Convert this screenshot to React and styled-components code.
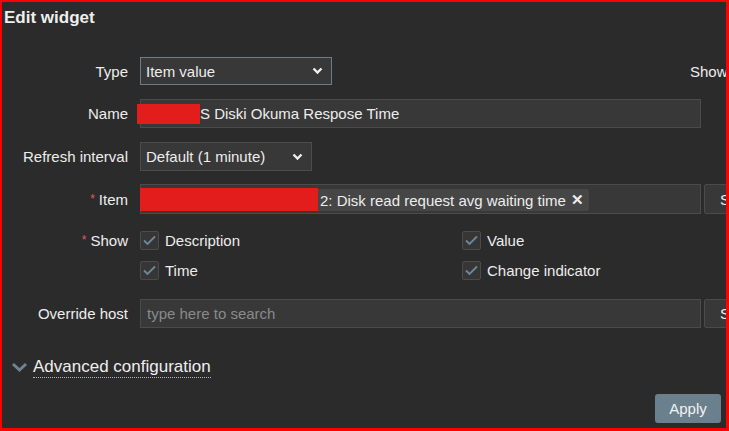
import React from "react";
import styled, { createGlobalStyle } from "styled-components";

const GlobalStyle = createGlobalStyle`
  html, body {
    margin: 0;
    padding: 0;
    background: #2b2b2b;
  }
  body {
    font-family: "Liberation Sans", Arial, sans-serif;
  }
`;

const Frame = styled.div`
  box-sizing: border-box;
  width: 729px;
  height: 431px;
  border: solid #ff0000;
  border-width: 2px 3px 3px 2px;
  background: #2b2b2b;
  overflow: hidden;
  color: #ededed;
  font-size: 15px;
`;

const Title = styled.div`
  padding: 6px 0 0 2px;
  font-size: 17px;
  line-height: 20px;
  font-weight: bold;
  color: #eeeeee;
`;

const Row = styled.div`
  display: flex;
  align-items: ${(p) => (p.top_align ? "flex-start" : "center")};
  margin-top: ${(p) => p.mt}px;
  height: ${(p) => (p.h ? `${p.h}px` : "auto")};
  white-space: nowrap;
`;

const Label = styled.div`
  flex-shrink: 0;
  width: 126px;
  margin-right: 12px;
  text-align: right;
  line-height: ${(p) => (p.lh ? `${p.lh}px` : "normal")};
`;

const Star = styled.span`
  color: #e45959;
  font-size: 12px;
  margin-right: 4px;
  position: relative;
  top: -2px;
`;

const SelectBox = styled.div`
  box-sizing: border-box;
  flex-shrink: 0;
  display: flex;
  align-items: center;
  justify-content: space-between;
  width: ${(p) => p.w}px;
  height: ${(p) => p.h || 29}px;
  padding: 0 8px 0 5px;
  background: #383838;
  border: 1px solid ${(p) => (p.focused ? "#6a7d89" : "#4c4c4c")};
`;

const SideLabel = styled.div`
  margin-left: ${(p) => p.ml}px;
`;

const TextField = styled.div`
  box-sizing: border-box;
  flex-shrink: 0;
  display: flex;
  align-items: center;
  width: 561px;
  height: ${(p) => p.h || 29}px;
  padding-left: ${(p) => (p.pl !== undefined ? p.pl : 6)}px;
  background: #383838;
  border: 1px solid #4b4b4b;
  color: ${(p) => (p.placeholder ? "#8a8a8a" : "#ededed")};
`;

const Redact = styled.span`
  display: inline-block;
  flex-shrink: 0;
  width: ${(p) => p.w}px;
  height: ${(p) => p.h}px;
  margin-left: ${(p) => p.ml || 0}px;
  background: #e31c1c;
  position: relative;
  top: ${(p) => p.dy || 0}px;
`;

const Tag = styled.div`
  display: flex;
  align-items: center;
  height: 22px;
  padding-right: 5px;
  margin-top: 2px;
  background: #464646;
  border-radius: 3px;
`;

const TagText = styled.span`
  margin-left: 2px;
`;

const Remove = styled.span`
  margin-left: 5px;
  font-weight: bold;
  font-size: 15px;
`;

const SideButton = styled.div`
  box-sizing: border-box;
  flex-shrink: 0;
  display: flex;
  align-items: center;
  margin-left: 3px;
  height: ${(p) => p.h || 29}px;
  padding: 0 15px;
  background: #383838;
  border: 1px solid #4b4b4b;
  border-radius: 2px;
`;

const CheckGrid = styled.div`
  display: grid;
  grid-template-columns: 322px auto;
  row-gap: 11px;
`;

const CheckItem = styled.div`
  display: flex;
  align-items: center;
  gap: 6px;
  height: 19px;
`;

const Box = styled.div`
  box-sizing: border-box;
  width: 19px;
  height: 19px;
  display: flex;
  align-items: center;
  justify-content: center;
  background: #363636;
  border: 1px solid #4b4b4b;
  border-radius: 2px;
`;

const Advanced = styled.div`
  display: flex;
  align-items: center;
  margin-top: 29px;
  padding-left: 9px;
  height: 21px;
`;

const AdvancedText = styled.span`
  margin-left: 5px;
  font-size: 17px;
  line-height: 20px;
  color: #eeeeee;
  border-bottom: 1px dotted #b5b5b5;
`;

const Footer = styled.div`
  display: flex;
  justify-content: flex-end;
  margin-top: 16px;
  padding-right: 5px;
`;

const Button = styled.div`
  box-sizing: border-box;
  display: flex;
  align-items: center;
  justify-content: center;
  width: 66px;
  height: 29px;
  background: #6b808d;
  border-radius: 3px;
  color: #f2f2f2;
  font-size: 15px;
`;

const Caret = () => (
  <svg width="11" height="8" viewBox="0 0 11 8">
    <polyline points="1.5,1.5 5.5,5.5 9.5,1.5" fill="none" stroke="#eeeeee" strokeWidth="2.4" />
  </svg>
);

const Tick = () => (
  <svg width="13" height="11" viewBox="0 0 13 11">
    <polyline points="1,5.5 4.5,9 12,1.5" fill="none" stroke="#6e8899" strokeWidth="1.8" />
  </svg>
);

const Check = ({ children }) => (
  <CheckItem>
    <Box>
      <Tick />
    </Box>
    {children}
  </CheckItem>
);

const App = () => {
  return (
    <>
      <GlobalStyle />
      <Frame>
        <Title>Edit widget</Title>

        <Row mt={29} h={28}>
          <Label>Type</Label>
          <SelectBox w={192} h={28} focused>
            Item value
            <Caret />
          </SelectBox>
          <SideLabel ml={358}>Show header</SideLabel>
        </Row>

        <Row mt={14} h={29}>
          <Label>Name</Label>
          <TextField pl={0}>
            <Redact w={63} h={20} ml={-4} />
            S Diski Okuma Respose Time
          </TextField>
        </Row>

        <Row mt={14} h={29}>
          <Label>Refresh interval</Label>
          <SelectBox w={172}>
            Default (1 minute)
            <Caret />
          </SelectBox>
        </Row>

        <Row mt={13} h={30}>
          <Label>
            <Star>*</Star>Item
          </Label>
          <TextField h={30} pl={0}>
            <Tag>
              <Redact w={178} h={23} ml={-1} dy={-1} />
              <TagText>2: Disk read request avg waiting time</TagText>
              <Remove>✕</Remove>
            </Tag>
          </TextField>
          <SideButton h={30}>Select</SideButton>
        </Row>

        <Row mt={17} top_align>
          <Label lh={19}>
            <Star>*</Star>Show
          </Label>
          <CheckGrid>
            <Check>Description</Check>
            <Check>Value</Check>
            <Check>Time</Check>
            <Check>Change indicator</Check>
          </CheckGrid>
        </Row>

        <Row mt={19} h={29}>
          <Label>Override host</Label>
          <TextField placeholder>type here to search</TextField>
          <SideButton>Select</SideButton>
        </Row>

        <Advanced>
          <svg width="17" height="11" viewBox="0 0 17 11">
            <polyline points="2,2 8.5,8 15,2" fill="none" stroke="#6c8494" strokeWidth="3" />
          </svg>
          <AdvancedText>Advanced configuration</AdvancedText>
        </Advanced>

        <Footer>
          <Button>Apply</Button>
        </Footer>
      </Frame>
    </>
  );
};

export default App;
